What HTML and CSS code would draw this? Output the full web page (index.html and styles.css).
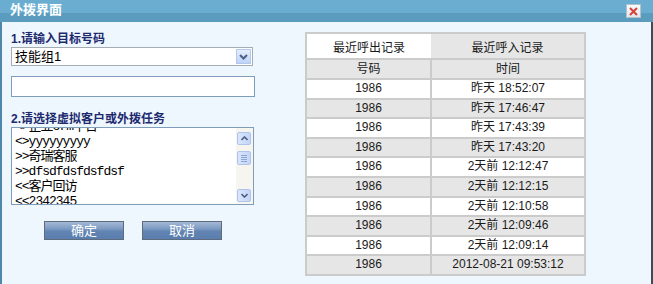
FILE: index.html
```html
<!DOCTYPE html>
<html lang="zh-CN">
<head>
    <meta charset="UTF-8">
    <title>外拨界面</title>
    <link rel="stylesheet" href="styles.css">
</head>
<body>
    <div class="dialog">
        <div class="titlebar">
            <span class="title">外拨界面</span>
            <span class="close">
                <svg width="9" height="9" viewBox="0 0 9 9"><path d="M1 1L8 8M8 1L1 8" stroke="#d8403a" stroke-width="2"/></svg>
            </span>
        </div>

        <div class="content">
            <!-- dial form -->
            <div class="left">
                <h2 class="step">1.请输入目标号码</h2>
                <div class="select">
                    <span>技能组1</span>
                    <span class="arrow">
                        <svg width="9" height="6" viewBox="0 0 9 6"><path d="M1 1L4.5 4.5L8 1" fill="none" stroke="#4d6185" stroke-width="2"/></svg>
                    </span>
                </div>
                <div class="field"></div>

                <h2 class="step step-second">2.请选择虚拟客户或外拨任务</h2>
                <div class="listbox">
                    <ul>
                        <li>&lt;&gt;企业crm平台</li>
                        <li>&lt;&gt;yyyyyyyyy</li>
                        <li>&gt;&gt;奇瑞客服</li>
                        <li>&gt;&gt;dfsdfdsfdsfdsf</li>
                        <li>&lt;&lt;客户回访</li>
                        <li>&lt;&lt;2342345</li>
                    </ul>
                    <div class="scrollbar">
                        <span class="sb-btn">
                            <svg width="7" height="5" viewBox="0 0 7 5"><path d="M0.5 4L3.5 1L6.5 4" fill="none" stroke="#4d6185" stroke-width="1.6"/></svg>
                        </span>
                        <span class="sb-thumb"><i></i><i></i><i></i><i></i></span>
                        <span class="sb-btn">
                            <svg width="7" height="5" viewBox="0 0 7 5"><path d="M0.5 1L3.5 4L6.5 1" fill="none" stroke="#4d6185" stroke-width="1.6"/></svg>
                        </span>
                    </div>
                </div>

                <div class="actions">
                    <span class="btn">确定</span>
                    <span class="btn">取消</span>
                </div>
            </div>

            <!-- call records -->
            <div class="records">
                <div class="tabs">
                    <div class="tab">最近呼出记录</div>
                    <div class="tab off">最近呼入记录</div>
                </div>
                <table>
                    <tr class="head"><td class="num">号码</td><td>时间</td></tr>
                    <tr><td class="num">1986</td><td>昨天 18:52:07</td></tr>
                    <tr><td class="num">1986</td><td>昨天 17:46:47</td></tr>
                    <tr><td class="num">1986</td><td>昨天 17:43:39</td></tr>
                    <tr><td class="num">1986</td><td>昨天 17:43:20</td></tr>
                    <tr><td class="num">1986</td><td>2天前 12:12:47</td></tr>
                    <tr><td class="num">1986</td><td>2天前 12:12:15</td></tr>
                    <tr><td class="num">1986</td><td>2天前 12:10:58</td></tr>
                    <tr><td class="num">1986</td><td>2天前 12:09:46</td></tr>
                    <tr><td class="num">1986</td><td>2天前 12:09:14</td></tr>
                    <tr><td class="num">1986</td><td>2012-08-21 09:53:12</td></tr>
                </table>
            </div>
        </div>
    </div>
</body>
</html>
```

FILE: styles.css
```css
* {
    box-sizing: border-box;
}

body {
    margin: 0;
    font-family: "Liberation Sans", "Noto Sans CJK SC", sans-serif;
    font-size: 12px;
    color: #1a1a1a;
}

.dialog {
    width: 653px;
    height: 284px;
    display: flex;
    flex-direction: column;
    overflow: hidden;
}

.titlebar {
    height: 22px;
    flex: none;
    display: flex;
    align-items: center;
    justify-content: space-between;
    padding: 0 12px 2px 10px;
    background: linear-gradient(#6aadd1 0, #6aadd1 13px, #5a9bbe 13px, #5a9bbe 100%);
}

.title {
    color: #fff;
    font-weight: bold;
    font-size: 13px;
    line-height: 14px;
}

.close {
    width: 15px;
    height: 14px;
    margin-top: 2px;
    display: flex;
    align-items: center;
    justify-content: center;
    border: 1px solid #b4c2cc;
    background: linear-gradient(#fbfbfb, #e2e6ea);
}

.content {
    flex: 1;
    display: flex;
    align-items: flex-start;
    padding: 10px 0 0 9px;
    background: #eff7fe;
    border-left: 2px solid #4f87aa;
    border-right: 2px solid #3e4c58;
}

/* left side */
.left {
    width: 244px;
}

.step {
    margin: 0;
    font-size: 12px;
    line-height: 14px;
    font-weight: bold;
    color: #1d2a6e;
}

.step-second {
    margin-top: 15px;
}

.select {
    margin-top: 1px;
    width: 242px;
    height: 19px;
    display: flex;
    align-items: center;
    justify-content: space-between;
    padding: 0 1px 0 3px;
    border: 1px solid #a5acb2;
    background: #fff;
    font-size: 13px;
    line-height: 15px;
    color: #000;
}

.arrow {
    width: 15px;
    height: 15px;
    display: flex;
    align-items: center;
    justify-content: center;
    border: 1px solid #b3c8ef;
    background: linear-gradient(#e6eefd, #bfd2f7);
}

.field {
    margin-top: 10px;
    width: 244px;
    height: 21px;
    border: 1px solid #7f9db9;
    background: #fff;
}

.listbox {
    margin-top: 1px;
    width: 243px;
    height: 78px;
    display: flex;
    border: 1px solid #7f9db9;
    background: #fff;
    overflow: hidden;
}

.listbox ul {
    flex: 1;
    margin: -9px 0 0;
    padding: 0 0 0 3px;
    list-style: none;
    font-family: "Liberation Mono", "Noto Sans CJK SC", monospace;
    font-size: 13px;
    line-height: 15px;
    letter-spacing: -1px;
    color: #000;
}

.scrollbar {
    width: 17px;
    display: flex;
    flex-direction: column;
    align-items: center;
    padding: 4px 1px 2px 0;
    background: #f6f5f0;
}

.sb-btn, .sb-thumb {
    width: 14px;
    display: flex;
    align-items: center;
    justify-content: center;
    border: 1px solid #b0c4ea;
    border-radius: 2px;
    background: linear-gradient(90deg, #dbe6fc, #c3d5f8);
}

.sb-btn {
    height: 13px;
}

.sb-thumb {
    height: 14px;
    margin: 6px 0 auto;
    flex-direction: column;
    gap: 1px;
}

.sb-thumb i {
    display: block;
    width: 6px;
    height: 1px;
    background: #8da6d6;
}

.actions {
    margin-top: 16px;
    padding-left: 33px;
    display: flex;
    gap: 18px;
}

.btn {
    width: 80px;
    height: 19px;
    border: 1px solid #5d6b7c;
    background: linear-gradient(#a3b9d6 0%, #7d9ac2 40%, #6184b2 55%, #5a7eae 100%);
    color: #fff;
    font-size: 13px;
    line-height: 17px;
    text-align: center;
}

/* right side */
.records {
    margin-left: 50px;
    width: 281px;
    border: 2px solid #cbcbcb;
}

.tabs {
    display: flex;
    height: 24px;
}

.tab {
    width: 124px;
    display: flex;
    align-items: center;
    justify-content: center;
    background: #fff;
}

.tab.off {
    flex: 1;
    background: #e6e6e6;
}

table {
    width: 100%;
    border-collapse: separate;
    border-spacing: 0;
}

td {
    padding: 0;
    text-align: center;
    line-height: 17.6px;
    border-top: 2px solid #cbcbcb;
    background: #fff;
}

td + td {
    border-left: 2px solid #cbcbcb;
}

td.num {
    width: 123px;
}

tr:nth-child(odd) td {
    background: #e6e6e6;
}

tr.head td {
    line-height: 18px;
}
```
